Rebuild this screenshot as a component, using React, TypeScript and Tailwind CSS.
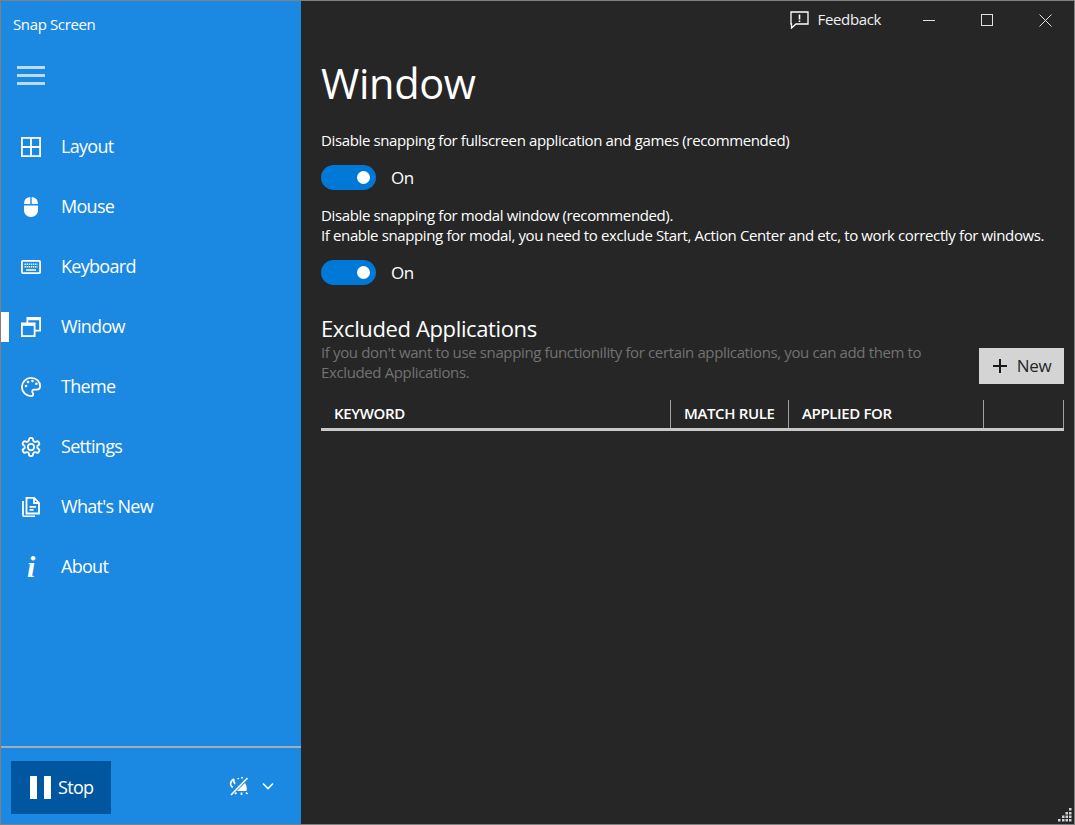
import React from "react";

const stroke = { fill: "none", stroke: "currentColor", strokeWidth: 1.8 };

function LayoutIcon() {
  return (
    <svg width="20" height="20" viewBox="0 0 20 20" {...stroke}>
      <rect x="0.9" y="0.9" width="18.2" height="18.2" />
      <path d="M10 1v18M1 10h18" />
    </svg>
  );
}
function MouseIcon() {
  return (
    <svg width="16" height="20" viewBox="0 0 16 20" fill="currentColor">
      <path d="M7.3 0.1v7H1c0-4 2.400-6.700 6.300-7zM8.700 0.100c3.900.3 6.300 3 6.300 7H8.700zM1 8.500h14V13c0 4-3 7-7 7s-7-3-7-7z" />
    </svg>
  );
}
function KeyboardIcon() {
  return (
    <svg width="20" height="14" viewBox="0 0 20 14" {...stroke}>
      <rect x="0.9" y="0.9" width="18.200" height="12.200" rx="1" />
      <path strokeWidth="1.500" strokeDasharray="1.400 0.700" d="M3.500 4.200h13M3.500 6.800h13" />
      <path strokeWidth="1.500" d="M5 10h10" />
    </svg>
  );
}
function WindowIcon() {
  return (
    <svg width="20" height="20" viewBox="0 0 20 20" {...stroke}>
      <rect x="0.9" y="6.400" width="12.700" height="12.700" />
      <path strokeWidth="2.800" d="M1 7.500h12.500" />
      <path d="M6.400 6V0.900h12.700v12.700H14" />
      <path strokeWidth="2.500" d="M6.500 2h13" />
    </svg>
  );
}
function PaletteIcon() {
  return (
    <svg width="20" height="20" viewBox="0 0 20 20" {...stroke}>
      <path d="M10 .9C4.900.9.900 4.900.900 10s4.100 9.100 9.100 9.100c1.400 0 2.200-.9 2.200-1.900 0-1.300-1-1.500-1-2.700 0-1.100.9-1.900 2-1.900h2.300c1.900 0 3.600-1.300 3.600-3.300C19.100 4.200 15.100.9 10 .9z" />
      <g fill="currentColor" stroke="none">
        <circle cx="5" cy="9" r="1.300" />
        <circle cx="7" cy="5" r="1.300" />
        <circle cx="11.500" cy="4" r="1.300" />
        <circle cx="15.300" cy="6.800" r="1.300" />
      </g>
    </svg>
  );
}
function GearIcon() {
  return (
    <svg width="22" height="22" viewBox="0 0 24 24" fill="none" stroke="currentColor" strokeWidth="2">
      <path d="M12.220 2h-.44a2 2 0 0 0-2 2v.18a2 2 0 0 1-1 1.730l-.43.250a2 2 0 0 1-2 0l-.15-.08a2 2 0 0 0-2.730.73l-.22.380a2 2 0 0 0 .73 2.730l.15.100a2 2 0 0 1 1 1.720v.510a2 2 0 0 1-1 1.740l-.15.090a2 2 0 0 0-.73 2.730l.22.380a2 2 0 0 0 2.730.73l.15-.08a2 2 0 0 1 2 0l.43.250a2 2 0 0 1 1 1.730V20a2 2 0 0 0 2 2h.44a2 2 0 0 0 2-2v-.18a2 2 0 0 1 1-1.730l.43-.250a2 2 0 0 1 2 0l.15.080a2 2 0 0 0 2.730-.73l.22-.390a2 2 0 0 0-.73-2.730l-.15-.080a2 2 0 0 1-1-1.740v-.500a2 2 0 0 1 1-1.740l.15-.090a2 2 0 0 0 .73-2.730l-.22-.380a2 2 0 0 0-2.730-.73l-.15.080a2 2 0 0 1-2 0l-.43-.250a2 2 0 0 1-1-1.730V4a2 2 0 0 0-2-2z" />
      <circle cx="12" cy="12" r="3.500" />
    </svg>
  );
}
function NewsIcon() {
  return (
    <svg width="18" height="20" viewBox="0 0 18 20" {...stroke}>
      <path d="M4.500.9h7.500l5 5v10.600H4.500z" />
      <path d="M12 1v5h5M7.500 9.800h6.500M7.500 12.800h4" />
      <path d="M1 4v14c0 .8.500 1.300 1.300 1.300H13" />
    </svg>
  );
}
function ThemeIcon() {
  return (
    <svg width="20" height="20" viewBox="0 0 20 20" fill="none" stroke="currentColor" strokeWidth="1.700">
      <path d="M2 19 18.500 2" />
      <path d="M5 3a6.500 6.500 0 0 0-3.500 5c.2 1.400 1 2.500 2.200 3.500M5 3c-.5 1.800-.2 3.500 1 5" />
      <path fill="currentColor" stroke="none" d="M16 7c2 3 2 5.500 1.500 8H8z" />
      <path d="M9 2l.5 1.200M13 1v1.500M18.500 18 17 16.500M12.500 16.500V19M7.500 16.500 6 18" />
    </svg>
  );
}

const nav: [string, React.ReactNode][] = [
  ["Layout", <LayoutIcon />],
  ["Mouse", <MouseIcon />],
  ["Keyboard", <KeyboardIcon />],
  ["Window", <WindowIcon />],
  ["Theme", <PaletteIcon />],
  ["Settings", <GearIcon />],
  ["What's New", <NewsIcon />],
  ["About", <span className="text-[30px] leading-none italic font-bold text-white [font-family:'Liberation_Serif',serif]">i</span>],
];

function Toggle() {
  return (
    <div className="flex items-center h-[25px] gap-[15px]">
      <div className="w-[55px] h-[25px] rounded-full bg-[#0078d7] flex items-center justify-end pr-[6px]">
        <div className="w-[13px] h-[13px] rounded-full bg-white" />
      </div>
      <span className="text-[17px] text-white">On</span>
    </div>
  );
}

const grip: [number, number][] = [
  [11, 0],
  [7.5, 4], [11, 4],
  [4, 7.5], [7.5, 7.5], [11, 7.5],
  [0, 11], [4, 11], [7.5, 11], [11, 11],
];

export default function App() {
  return (
    <div className="w-[1075px] h-[825px] relative flex border border-[#808080] bg-[#262626] text-white overflow-hidden [font-family:'Open_Sans','Noto_Sans',sans-serif] tracking-[-0.37px]">
      <aside className="w-[300px] shrink-0 bg-[#1b88e2] flex flex-col">
        <div className="h-[48px] pl-[12px] pt-[13px] text-[15px] leading-[20px]">Snap Screen</div>
        <div className="h-[54px] pl-[16px] flex items-center">
          <svg width="28" height="20" viewBox="0 0 28 20" fill="#b9dbf6">
            <rect x="0" y="0" width="28" height="3" />
            <rect x="0" y="8" width="28" height="3" />
            <rect x="0" y="16" width="28" height="3" />
          </svg>
        </div>
        <nav className="mt-[14px] flex flex-col">
          {nav.map(([label, icon]) => (
            <div key={label} className="h-[60px] flex items-center relative">
              {label === "Window" && <div className="absolute left-0 top-[15px] w-[8px] h-[30px] bg-white" />}
              <div className="w-[60px] flex justify-center">{icon}</div>
              <span className="text-[18px] tracking-[-0.7px] -mt-[2px] text-white">{label}</span>
            </div>
          ))}
        </nav>
        <div className="mt-auto h-[78px] border-t-2 border-[#a3adb5] flex items-center pl-[10px] pt-[2px]">
          <div className="w-[100px] h-[53px] bg-[#01579f] flex items-center pl-[19px] gap-[7px]">
            <div className="flex gap-[7px]">
              <div className="w-[7px] h-[23px] bg-white" />
              <div className="w-[7px] h-[23px] bg-white" />
            </div>
            <span className="text-[18px] tracking-[-0.7px] mt-[1px]">Stop</span>
          </div>
          <div className="ml-[118px] flex items-center gap-[13px] -mt-[2px]">
            <ThemeIcon />
            <svg width="12" height="8" viewBox="0 0 12 8" fill="none" stroke="currentColor" strokeWidth="1.600">
              <path d="M1 1.500l5 5 5-5" />
            </svg>
          </div>
        </div>
      </aside>
      <main className="flex-1 flex flex-col min-w-0">
        <div className="h-[38px] flex items-center justify-end">
          <svg width="19" height="18" viewBox="0 0 19 18" fill="none" stroke="currentColor" strokeWidth="1.300">
            <path d="M1 1h17v12H6l-4.500 4V13H1z" />
            <path strokeWidth="1.600" d="M9.500 3.500v5M9.500 9.500v1.500" />
          </svg>
          <span className="ml-[9px] -mt-[1px] text-[15px] text-[#f0f0f0]">Feedback</span>
          <div className="w-[58px] ml-[19px] flex justify-center">
            <div className="w-[12px] h-px bg-[#e0e0e0]" />
          </div>
          <div className="w-[58px] flex justify-center">
            <div className="w-[12px] h-[12px] border border-[#e0e0e0]" />
          </div>
          <div className="w-[58px] flex justify-center">
            <svg width="13" height="13" viewBox="0 0 13 13" stroke="#e0e0e0" strokeWidth="1">
              <path d="M.5.500l12 12M12.500.500l-12 12" />
            </svg>
          </div>
        </div>
        <div className="pl-[20px] pr-[10px] flex flex-col">
          <h1 className="text-[41.500px] leading-[56px] mt-[16px]">Window</h1>
          <p className="mt-[19px] text-[15px] leading-[20px]">Disable snapping for fullscreen application and games (recommended)</p>
          <div className="mt-[15px]"><Toggle /></div>
          <p className="mt-[15px] text-[15px] leading-[20px]">Disable snapping for modal window (recommended).<br />If enable snapping for modal, you need to exclude Start, Action Center and etc, to work correctly for windows.</p>
          <div className="mt-[15px]"><Toggle /></div>
          <h2 className="mt-[28px] text-[22px] leading-[30px]">Excluded Applications</h2>
          <div className="flex items-start justify-between">
            <p className="w-[630px] -mt-[1px] text-[15px] leading-[20px] text-[#727272]">If you don't want to use snapping functionility for certain applications, you can add them to Excluded Applications.</p>
            <div className="w-[85px] h-[36px] bg-[#d4d4d4] text-[#262626] flex items-center justify-center gap-[9px] mt-[5px]">
              <svg width="16" height="16" viewBox="0 0 16 16" stroke="#1a1a1a" strokeWidth="2">
                <path d="M8 1v14M1 8h14" />
              </svg>
              <span className="text-[17px]">New</span>
            </div>
          </div>
          <div className="mt-[16px] h-[31px] grid grid-cols-[350px_118px_195px_80px] border-b-[3px] border-[#c8c8c8] text-[15px] font-semibold">
            <div className="pl-[13px] pt-[2px] border-r border-[#a0a0a0]">KEYWORD</div>
            <div className="pl-[13px] pt-[2px] border-r border-[#a0a0a0]">MATCH RULE</div>
            <div className="pl-[13px] pt-[2px] border-r border-[#a0a0a0]">APPLIED FOR</div>
            <div className="border-r border-[#a0a0a0]" />
          </div>
        </div>
      </main>
      <svg className="absolute right-[2px] bottom-[2px]" width="14" height="14" viewBox="0 0 14 14" fill="#d0d0d8">
        {grip.map(([x, y]) => (
          <rect key={`${x}-${y}`} x={x} y={y} width="2.500" height="2.500" />
        ))}
      </svg>
    </div>
  );
}
